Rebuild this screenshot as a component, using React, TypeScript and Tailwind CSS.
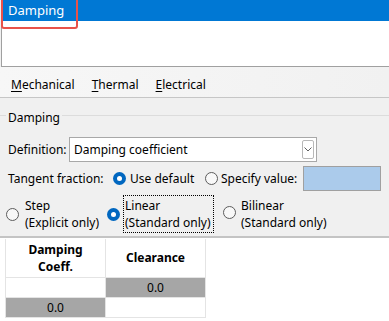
import React from 'react';

function Radio({ checked }: { checked?: boolean }) {
  if (checked) {
    return (
      <span className="inline-flex w-[13px] h-[13px] rounded-full bg-[#0067c0] items-center justify-center shrink-0">
        <span className="w-[5px] h-[5px] rounded-full bg-white" />
      </span>
    );
  }
  return <span className="inline-block w-[13px] h-[13px] rounded-full border border-[#5c5c5c] bg-[#f8f8f8] shrink-0" />;
}

function Accel({ k, rest }: { k: string; rest: string }) {
  return (
    <span>
      <span className="underline underline-offset-2">{k}</span>
      {rest}
    </span>
  );
}

export default function App() {
  return (
    <div className="relative w-[389px] h-[321px] overflow-hidden bg-[#f0f0f0] text-[12px] text-black font-['Noto_Sans',sans-serif]">
      {/* List */}
      <div className="ml-px h-[67px] bg-white border-l border-b border-[#a0a0a0]">
        <div className="h-[21px] bg-[#0078d4] text-white pl-[6px] text-[13px] leading-[21px]">Damping</div>
      </div>
      <div className="absolute left-px top-[-3px] w-[77px] h-[32px] border-2 border-[#e8524a] rounded-[3px]" />

      {/* Menu tabs */}
      <div className="h-[31px] border-b border-[#c6c6c6] bg-gradient-to-r from-[#f7f7f7] to-[#f1f1f1] flex items-center pt-[6px] pl-[11px] gap-[17px] leading-none">
        <Accel k="M" rest="echanical" />
        <Accel k="T" rest="hermal" />
        <Accel k="E" rest="lectrical" />
      </div>

      {/* Group header */}
      <div className="relative h-[39px]">
        <div className="absolute left-0 right-0 top-[17px] border-t border-[#dcdcdc]" />
        <div className="absolute left-[6px] top-[13px] px-[2px] bg-[#f0f0f0] leading-[14px]">Damping</div>
      </div>

      <div className="flex items-center pl-[8px] h-[25px]">
        <span className="w-[61px]">Definition:</span>
        <div className="w-[248px] h-[25px] bg-white border border-[#a8a8a8] flex items-center justify-between pl-[4px] pr-[2px]">
          <span>Damping coefficient</span>
          <span className="w-[12px] h-[19px] border border-[#b8b8b8] rounded-[2px] flex items-center justify-center">
            <svg width="8" height="5" viewBox="0 0 8 5"><path d="M0.5 0.5 L4 4 L7.5 0.5" fill="none" stroke="#606060" strokeWidth="1" /></svg>
          </span>
        </div>
      </div>

      <div className="flex items-center mt-[4px] pl-[8px] h-[25px]">
        <span className="w-[105px]">Tangent fraction:</span>
        <Radio checked />
        <span className="ml-[4px] w-[75px]">Use default</span>
        <Radio />
        <span className="ml-[3px] w-[82px]">Specify value:</span>
        <div className="w-[78px] h-[25px] bg-[#abcbeb] border border-[#a0a0a0]" />
      </div>

      <div className="flex items-center mt-[4px] pl-[6px] h-[38px] leading-[17px]">
        <Radio />
        <div className="ml-[6px] w-[82px]">
          <div>Step</div>
          <div>(Explicit only)</div>
        </div>
        <Radio checked />
        <div className="ml-[3px] w-[91px] h-[38px] border border-dotted border-black px-px pt-px">
          <div>Linear</div>
          <div>(Standard only)</div>
        </div>
        <span className="ml-[9px]"><Radio /></span>
        <div className="ml-[5px]">
          <div>Bilinear</div>
          <div>(Standard only)</div>
        </div>
      </div>

      {/* Table */}
      <div className="mt-[3px] h-[90px] bg-white border-t-2 border-[#c4c4c4] pl-[5px] pt-[1px]">
        <div className="grid grid-cols-[100px_100px] w-[201px] border-l border-[#e4e4e4]">
          <div className="h-[39px] border-r border-b border-[#e4e4e4] flex flex-col items-center justify-center font-bold leading-[17px]">
            <span>Damping</span>
            <span>Coeff.</span>
          </div>
          <div className="h-[39px] border-r border-b border-[#e4e4e4] flex items-center justify-center font-bold">Clearance</div>
          <div className="h-[20px] border-r border-b border-[#e4e4e4]" />
          <div className="h-[20px] border-r border-b border-[#e4e4e4] bg-[#a6a6a6] text-center leading-[19px]">0.0</div>
          <div className="h-[20px] border-r border-b border-[#e4e4e4] bg-[#a6a6a6] text-center leading-[19px]">0.0</div>
          <div className="h-[20px] border-r border-b border-[#e4e4e4]" />
        </div>
      </div>
    </div>
  );
}
